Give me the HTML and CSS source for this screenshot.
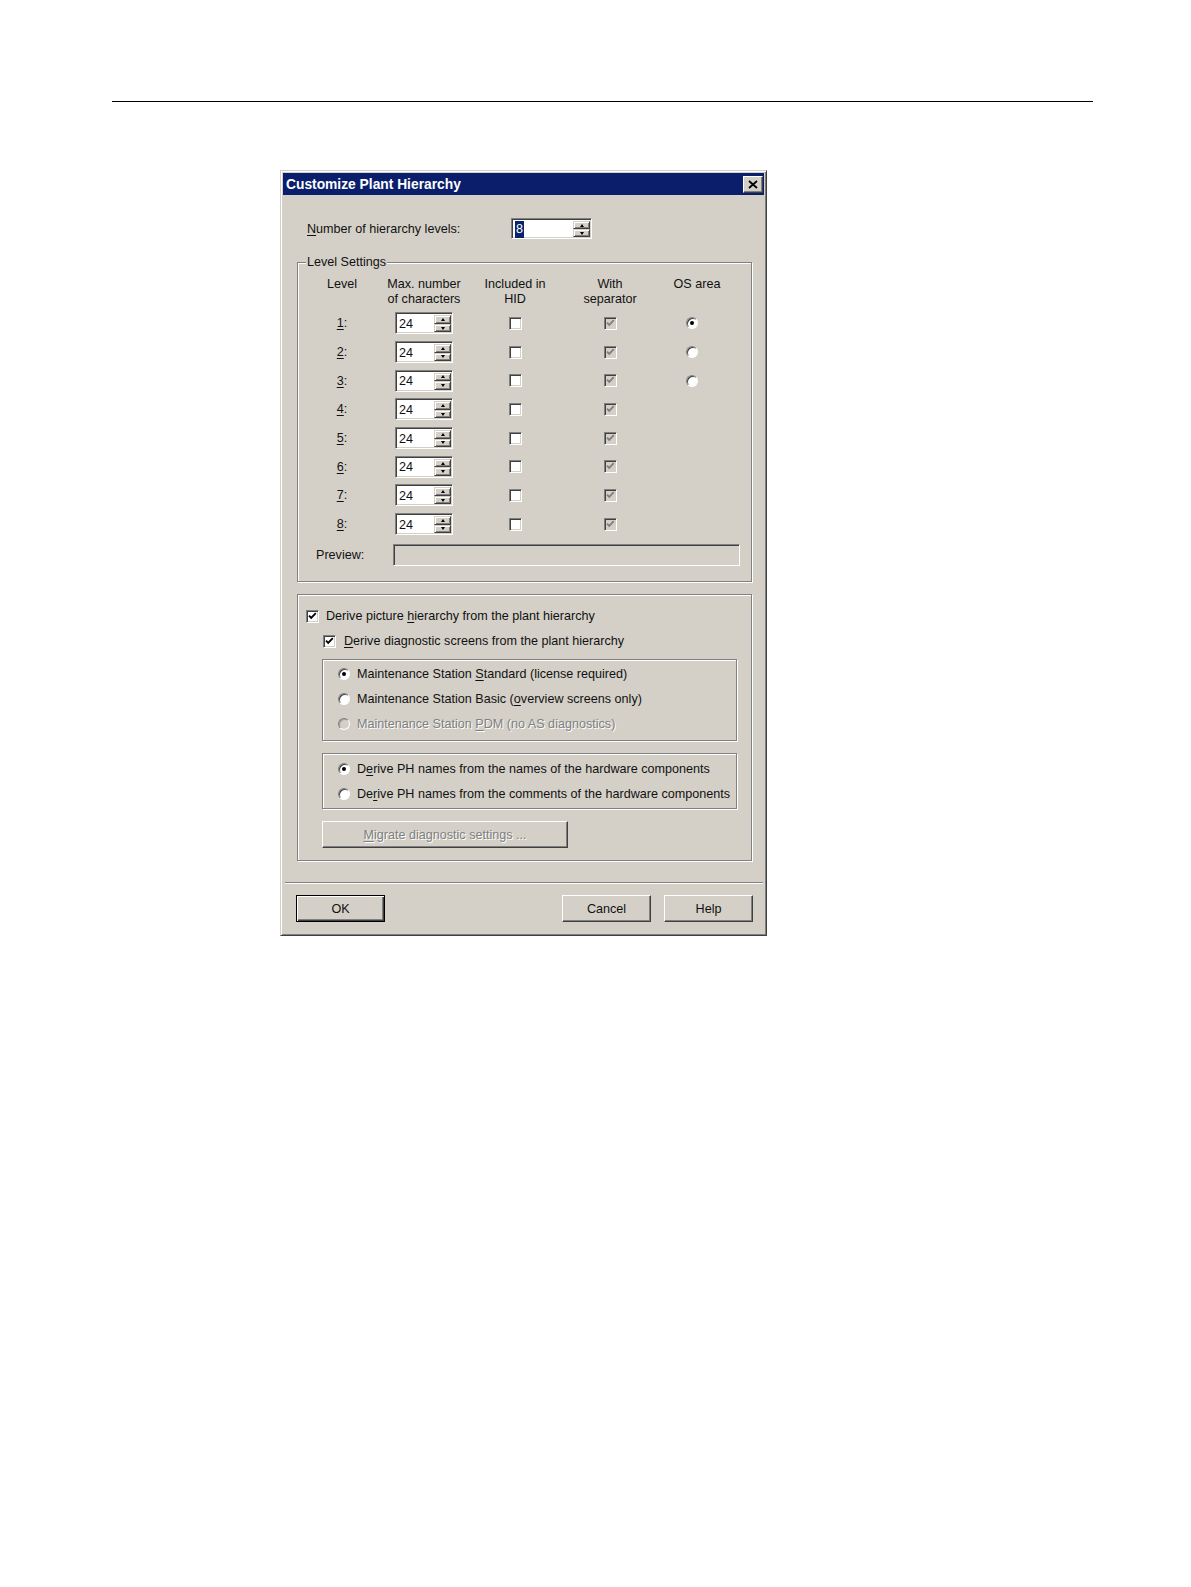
FILE: index.html
```html
<!DOCTYPE html>
<html>
<head>
<meta charset="utf-8">
<title>Customize Plant Hierarchy</title>
<link rel="stylesheet" href="styles.css">
</head>
<body>
<div class="rule"></div>
<div class="dialog">
  <div class="titlebar">
    <span class="title">Customize Plant Hierarchy</span>
    <span class="close"><svg viewBox="0 0 10 9" width="10" height="9"><path d="M1 1 L9 8 M9 1 L1 8" stroke="#000" stroke-width="1.8" fill="none"/></svg></span>
  </div>
  <div class="body">
    <div class="numrow">
      <span class="numlabel"><u>N</u>umber of hierarchy levels:</span>
      <div class="spin spin-lg">
        <span class="spin-text"><span class="sel">8</span></span>
        <span class="spin-btns"><span class="sbtn"><i class="up"></i></span><span class="sbtn"><i class="dn"></i></span></span>
      </div>
    </div>

    <div class="group g1">
      <span class="legend">Level Settings</span>
      <div class="cols hdr">
        <div>Level</div>
        <div>Max. number<br>of characters</div>
        <div>Included in<br>HID</div>
        <div>With<br>separator</div>
        <div class="os">OS area</div>
      </div>
      <div class="cols rows">
        <div><u>1</u>:</div>
        <div class="spin"><span class="spin-text">24</span><span class="spin-btns"><span class="sbtn"><i class="up"></i></span><span class="sbtn"><i class="dn"></i></span></span></div>
        <div class="cb"></div>
        <div class="cb dis"><svg viewBox="0 0 9 9" width="9" height="9"><path d="M1 3.6 L3.2 5.8 L7.8 1.2" stroke="#808080" stroke-width="1.9" fill="none"/></svg></div>
        <div class="rb on os-r"></div>

        <div><u>2</u>:</div>
        <div class="spin"><span class="spin-text">24</span><span class="spin-btns"><span class="sbtn"><i class="up"></i></span><span class="sbtn"><i class="dn"></i></span></span></div>
        <div class="cb"></div>
        <div class="cb dis"><svg viewBox="0 0 9 9" width="9" height="9"><path d="M1 3.6 L3.2 5.8 L7.8 1.2" stroke="#808080" stroke-width="1.9" fill="none"/></svg></div>
        <div class="rb os-r"></div>

        <div><u>3</u>:</div>
        <div class="spin"><span class="spin-text">24</span><span class="spin-btns"><span class="sbtn"><i class="up"></i></span><span class="sbtn"><i class="dn"></i></span></span></div>
        <div class="cb"></div>
        <div class="cb dis"><svg viewBox="0 0 9 9" width="9" height="9"><path d="M1 3.6 L3.2 5.8 L7.8 1.2" stroke="#808080" stroke-width="1.9" fill="none"/></svg></div>
        <div class="rb os-r"></div>

        <div><u>4</u>:</div>
        <div class="spin"><span class="spin-text">24</span><span class="spin-btns"><span class="sbtn"><i class="up"></i></span><span class="sbtn"><i class="dn"></i></span></span></div>
        <div class="cb"></div>
        <div class="cb dis"><svg viewBox="0 0 9 9" width="9" height="9"><path d="M1 3.6 L3.2 5.8 L7.8 1.2" stroke="#808080" stroke-width="1.9" fill="none"/></svg></div>
        <div></div>

        <div><u>5</u>:</div>
        <div class="spin"><span class="spin-text">24</span><span class="spin-btns"><span class="sbtn"><i class="up"></i></span><span class="sbtn"><i class="dn"></i></span></span></div>
        <div class="cb"></div>
        <div class="cb dis"><svg viewBox="0 0 9 9" width="9" height="9"><path d="M1 3.6 L3.2 5.8 L7.8 1.2" stroke="#808080" stroke-width="1.9" fill="none"/></svg></div>
        <div></div>

        <div><u>6</u>:</div>
        <div class="spin"><span class="spin-text">24</span><span class="spin-btns"><span class="sbtn"><i class="up"></i></span><span class="sbtn"><i class="dn"></i></span></span></div>
        <div class="cb"></div>
        <div class="cb dis"><svg viewBox="0 0 9 9" width="9" height="9"><path d="M1 3.6 L3.2 5.8 L7.8 1.2" stroke="#808080" stroke-width="1.9" fill="none"/></svg></div>
        <div></div>

        <div><u>7</u>:</div>
        <div class="spin"><span class="spin-text">24</span><span class="spin-btns"><span class="sbtn"><i class="up"></i></span><span class="sbtn"><i class="dn"></i></span></span></div>
        <div class="cb"></div>
        <div class="cb dis"><svg viewBox="0 0 9 9" width="9" height="9"><path d="M1 3.6 L3.2 5.8 L7.8 1.2" stroke="#808080" stroke-width="1.9" fill="none"/></svg></div>
        <div></div>

        <div><u>8</u>:</div>
        <div class="spin"><span class="spin-text">24</span><span class="spin-btns"><span class="sbtn"><i class="up"></i></span><span class="sbtn"><i class="dn"></i></span></span></div>
        <div class="cb"></div>
        <div class="cb dis"><svg viewBox="0 0 9 9" width="9" height="9"><path d="M1 3.6 L3.2 5.8 L7.8 1.2" stroke="#808080" stroke-width="1.9" fill="none"/></svg></div>
        <div></div>
      </div>
      <div class="preview">
        <span class="plabel">Preview:</span>
        <div class="pfield"></div>
      </div>
    </div>

    <div class="group g2">
      <div class="crow">
        <span class="cb"><svg viewBox="0 0 9 9" width="9" height="9"><path d="M1 3.6 L3.2 5.8 L7.8 1.2" stroke="#000" stroke-width="1.9" fill="none"/></svg></span>
        <span>Derive picture <u>h</u>ierarchy from the plant hierarchy</span>
      </div>
      <div class="crow indent">
        <span class="cb"><svg viewBox="0 0 9 9" width="9" height="9"><path d="M1 3.6 L3.2 5.8 L7.8 1.2" stroke="#000" stroke-width="1.9" fill="none"/></svg></span>
        <span><u>D</u>erive diagnostic screens from the plant hierarchy</span>
      </div>
      <div class="group sub sub1">
        <div class="rrow"><span class="rb on"></span><span>Maintenance Station <u>S</u>tandard (license required)</span></div>
        <div class="rrow"><span class="rb"></span><span>Maintenance Station Basic (<u>o</u>verview screens only)</span></div>
        <div class="rrow"><span class="rb dis"></span><span class="distext">Maintenance Station <u>P</u>DM (no AS diagnostics)</span></div>
      </div>
      <div class="group sub sub2">
        <div class="rrow"><span class="rb on"></span><span>D<u>e</u>rive PH names from the names of the hardware components</span></div>
        <div class="rrow"><span class="rb"></span><span>De<u>r</u>ive PH names from the comments of the hardware components</span></div>
      </div>
      <div class="btn migrate"><span class="distext"><u>M</u>igrate diagnostic settings ...</span></div>
    </div>
  </div>
  <div class="sep"></div>
  <div class="footer">
    <div class="btn default">OK</div>
    <div class="btn cancel">Cancel</div>
    <div class="btn">Help</div>
  </div>
</div>
</body>
</html>
```

FILE: styles.css
```css
* { box-sizing: border-box; }

body {
  margin: 0;
  background: #fff;
  font-family: "Liberation Sans", Arial, sans-serif;
  font-size: 12.6px;
  color: #111;
}

u { text-decoration: underline; text-underline-offset: 2px; }

.rule {
  margin: 101px 98px 0 112px;
  height: 1px;
  background: #000;
}

.dialog {
  margin: 68px 0 0 280px;
  width: 487px;
  height: 766px;
  background: #d4d0c8;
  border: 1px solid;
  border-color: #d4d0c8 #404040 #404040 #d4d0c8;
  box-shadow: inset 1px 1px 0 #fff, inset -1px -1px 0 #808080;
  padding: 2px;
  display: flex;
  flex-direction: column;
}

.titlebar {
  height: 22px;
  background: #0a1e6c;
  display: flex;
  align-items: center;
  justify-content: space-between;
  padding-left: 3px;
}

.title {
  color: #fff;
  font-weight: bold;
  font-size: 13.8px;
}

.close {
  width: 20px;
  height: 17px;
  margin-right: 1px;
  background: #d4d0c8;
  border: 1px solid;
  border-color: #fff #404040 #404040 #fff;
  box-shadow: inset -1px -1px 0 #808080;
  display: flex;
  align-items: center;
  justify-content: center;
}

.body {
  padding: 0 12px 0 14px;
}

.numrow {
  margin-top: 23px;
  height: 21px;
  display: flex;
  align-items: center;
}

.numlabel {
  width: 214px;
  padding-left: 10px;
}

/* spinner */
.spin {
  width: 58px;
  height: 22px;
  display: flex;
  background: #fff;
  border: 1px solid;
  border-color: #808080 #fff #fff #808080;
  box-shadow: inset 1px 1px 0 #404040, inset -1px -1px 0 #d4d0c8;
  padding: 2px 1px 1px 2px;
}

.spin-lg {
  width: 81px;
  height: 21px;
}

.spin-text {
  flex: 1;
  display: flex;
  align-items: center;
  padding-left: 1px;
  line-height: 16px;
}

.sel {
  background: #0a246a;
  color: #fff;
  padding: 0 1px;
  line-height: 17px;
}

.spin-btns {
  width: 17px;
  display: flex;
  flex-direction: column;
}

.sbtn {
  flex: 1;
  background: #d4d0c8;
  border: 1px solid;
  border-color: #d4d0c8 #404040 #404040 #d4d0c8;
  box-shadow: inset 1px 1px 0 #fff, inset -1px -1px 0 #808080;
  display: flex;
  align-items: center;
  justify-content: center;
}

.up, .dn {
  width: 0;
  height: 0;
  border-left: 2.5px solid transparent;
  border-right: 2.5px solid transparent;
}
.up { border-bottom: 3px solid #000; }
.dn { border-top: 3px solid #000; }

/* groups */
.group {
  position: relative;
  border: 1px solid #808080;
  box-shadow: inset 1px 1px 0 #fff, 1px 1px 0 #fff;
}

.legend {
  position: absolute;
  left: 8px;
  top: -8px;
  line-height: 15px;
  padding: 0 1px;
  background: #d4d0c8;
}

.g1 {
  margin-top: 23px;
  padding: 14px 0 15px 0;
}

.cols {
  display: grid;
  grid-template-columns: 88px 76px 106px 84px 84px;
}

.hdr {
  height: 30px;
  line-height: 15px;
  text-align: center;
}

.hdr .os { padding-left: 6px; }

.rows {
  margin-top: 2px;
  grid-auto-rows: 28.7px;
  align-items: center;
  justify-items: center;
}

.preview {
  margin-top: 5.7px;
  height: 22px;
  display: flex;
  align-items: center;
}

.plabel {
  width: 95px;
  padding-left: 18px;
}

.pfield {
  width: 347px;
  height: 22px;
  background: #d4d0c8;
  border: 1px solid;
  border-color: #808080 #fff #fff #808080;
  box-shadow: inset 1px 1px 0 #404040, inset -1px -1px 0 #d4d0c8;
}

/* checkbox & radio */
.cb {
  width: 13px;
  height: 13px;
  flex: none;
  background: #fff;
  border: 1px solid;
  border-color: #808080 #fff #fff #808080;
  box-shadow: inset 1px 1px 0 #404040, inset -1px -1px 0 #d4d0c8;
  display: flex;
  align-items: center;
  justify-content: center;
}

.cb.dis { background: #d4d0c8; }

.rb {
  width: 12px;
  height: 12px;
  flex: none;
  border-radius: 50%;
  background: #fff;
  border: 1px solid;
  border-color: #808080 #fff #fff #808080;
  box-shadow: inset 1px 1px 0 #404040;
  display: flex;
  align-items: center;
  justify-content: center;
}

.rb.on::after {
  content: "";
  width: 4px;
  height: 4px;
  border-radius: 50%;
  background: #000;
}

.rb.dis {
  background: #d4d0c8;
  box-shadow: inset 1px 1px 0 #a0a0a0;
}

.rows .os-r { margin-left: -4px; }

.distext {
  color: #808080;
  text-shadow: 1px 1px 0 #fff;
}

/* group 2 */
.g2 {
  margin-top: 12px;
  padding: 8.5px 0 12px 8px;
}

.crow {
  height: 25px;
  display: flex;
  align-items: center;
  gap: 7px;
}

.crow.indent {
  padding-left: 17px;
  gap: 8px;
}

.sub {
  margin-left: 16px;
  width: 415px;
  padding-left: 15px;
}

.sub1 {
  margin-top: 5.5px;
  padding-top: 1.5px;
  padding-bottom: 3.5px;
}

.sub2 {
  margin-top: 12px;
  padding-top: 2.5px;
  padding-bottom: 1.5px;
}

.rrow {
  height: 25px;
  display: flex;
  align-items: center;
  gap: 7px;
}

/* buttons */
.btn {
  width: 89px;
  height: 27px;
  display: flex;
  align-items: center;
  justify-content: center;
  background: #d4d0c8;
  border: 1px solid;
  border-color: #fff #404040 #404040 #fff;
  box-shadow: inset -1px -1px 0 #808080;
}

.btn.default {
  border: 1px solid #000;
  box-shadow: inset 1px 1px 0 #fff, inset -1px -1px 0 #404040, inset -2px -2px 0 #808080;
}

.migrate {
  margin-top: 12px;
  margin-left: 16px;
  width: 246px;
}

.sep {
  margin: 21px 1px 0 2px;
  height: 2px;
  border-top: 1px solid #808080;
  border-bottom: 1px solid #fff;
}

.footer {
  margin-top: 11px;
  display: flex;
  padding: 0 11px 0 13px;
  gap: 13px;
}

.footer .cancel { margin-left: auto; }
```
